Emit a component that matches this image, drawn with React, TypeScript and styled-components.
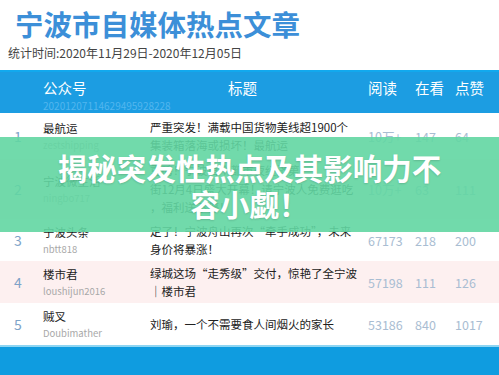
import React from "react"
import styled, { createGlobalStyle } from "styled-components"

interface Row {
  name: string
  handle: string
  title: string[]
  read: string
  watch: string
  like: string
  height: number
}

const rows: Row[] = [
  {
    name: "最航运",
    handle: "zestshipping",
    title: ["严重突发！满载中国货物美线超1900个", "集装箱落海或损坏！最航运"],
    read: "10万+",
    watch: "147",
    like: "64",
    height: 46,
  },
  {
    name: "宁波微生活",
    handle: "ningbo717",
    title: [
      "重磅！宁波首个都市夜经济第一",
      "街12月4日盛大开幕！请宁波人免费逛吃",
      "，福利送不停！",
    ],
    read: "10万+",
    watch: "63",
    like: "111",
    height: 60,
  },
  {
    name: "宁波头条",
    handle: "nbtt818",
    title: ["定了！宁波舟山再次“牵手成功”，未来", "身价将暴涨！"],
    read: "67173",
    watch: "218",
    like: "200",
    height: 42,
  },
  {
    name: "楼市君",
    handle: "loushijun2016",
    title: ["绿城这场“走秀级”交付，惊艳了全宁波", "｜楼市君"],
    read: "57198",
    watch: "111",
    like: "126",
    height: 42,
  },
  {
    name: "贼叉",
    handle: "Doubimather",
    title: ["刘瑜，一个不需要食人间烟火的家长"],
    read: "53186",
    watch: "840",
    like: "1017",
    height: 42,
  },
]

const App = () => {
  return (
    <Page>
      <GlobalStyle />
      <Head>
        <Title>宁波市自媒体热点文章</Title>
        <Period>统计时间:2020年11月29日-2020年12月05日</Period>
      </Head>
      <Table>
        <HeaderRow>
          <span />
          <NameHead>
            <HeadLabel>公众号</HeadLabel>
            <HeadCode>20201207114629495928228</HeadCode>
          </NameHead>
          <HeadLabel $indent={78}>标题</HeadLabel>
          <HeadLabel>阅读</HeadLabel>
          <HeadLabel>在看</HeadLabel>
          <HeadLabel>点赞</HeadLabel>
        </HeaderRow>
        {rows.map((row, i) => (
          <DataRow key={row.handle} $height={row.height} $alt={i % 2 === 1}>
            <Index>{i + 1}</Index>
            <NameCell>
              <Name>{row.name}</Name>
              <Handle>{row.handle}</Handle>
            </NameCell>
            <TitleCell>
              {row.title.map((line) => (
                <div key={line}>{line}</div>
              ))}
            </TitleCell>
            <Stat>{row.read}</Stat>
            <Stat>{row.watch}</Stat>
            <Stat>{row.like}</Stat>
          </DataRow>
        ))}
        <Banner>
          <BannerText>揭秘突发性热点及其影响力不容小觑！</BannerText>
        </Banner>
      </Table>
      <Footer />
    </Page>
  )
}

export default App

const GlobalStyle = createGlobalStyle`
  html, body {
    margin: 0;
    padding: 0;
    background: #ffffff;
  }
  body {
    width: 499px;
    height: 375px;
    overflow: hidden;
    font-family: "Noto Sans CJK SC", "Noto Sans", sans-serif;
  }
`

const Page = styled.div`
  width: 499px;
  height: 375px;
  display: flex;
  flex-direction: column;
  overflow: hidden;
`

const Head = styled.header`
  height: 70px;
  box-sizing: border-box;
  padding: 6px 0 0 15px;
`

const Title = styled.h1`
  margin: 0;
  font-size: 28.5px;
  line-height: 36px;
  font-weight: 700;
  color: #3c8fd8;
`

const Period = styled.div`
  margin-top: 2px;
  margin-left: -7px;
  font-size: 12px;
  line-height: 18px;
  color: #444444;
`

const Table = styled.div`
  position: relative;
  border-top: 2px solid #12a9ee;
`

const columns = "36px 114px 218px 47px 40px 1fr"

const HeaderRow = styled.div`
  display: grid;
  grid-template-columns: ${columns};
  height: 41px;
  background: #1c9de2;
  color: #ffffff;
  padding-top: 5px;
  box-sizing: border-box;
`

const NameHead = styled.div`
  display: flex;
  flex-direction: column;
  padding-left: 7px;
`

const HeadLabel = styled.div<{ $indent?: number }>`
  font-size: 14.5px;
  line-height: 22px;
  padding-left: ${(p) => p.$indent ?? 0}px;
`

const HeadCode = styled.div`
  font-size: 10px;
  line-height: 13px;
  color: #52b6ee;
  white-space: nowrap;
`

const DataRow = styled.div<{ $height: number; $alt: boolean }>`
  display: grid;
  grid-template-columns: ${columns};
  align-items: center;
  height: ${(p) => p.$height}px;
  background: ${(p) => (p.$alt ? "#fdf0f0" : "#ffffff")};
`

const Index = styled.div`
  text-align: center;
  font-size: 14px;
  color: #7ea3c8;
`

const NameCell = styled.div`
  padding-left: 7px;
  display: flex;
  flex-direction: column;
`

const Name = styled.div`
  font-size: 11.5px;
  line-height: 18px;
  color: #222222;
`

const Handle = styled.div`
  font-size: 9.5px;
  line-height: 16px;
  color: #a8a8a8;
`

const TitleCell = styled.div`
  font-size: 11.5px;
  line-height: 18.5px;
  color: #222222;
  white-space: nowrap;
`

const Stat = styled.div`
  font-size: 12.5px;
  color: #a9bdd2;
`

const Banner = styled.div`
  position: absolute;
  left: 0;
  right: 0;
  top: 65px;
  height: 95px;
  background: rgba(98, 214, 162, 0.9);
  display: flex;
  align-items: center;
  justify-content: center;
`

const BannerText = styled.div`
  width: 400px;
  text-align: center;
  font-size: 29.5px;
  line-height: 36px;
  font-weight: 700;
  color: #ffffff;
  text-shadow: 0 1px 2px rgba(0, 0, 0, 0.15);
`

const Footer = styled.footer`
  flex: 1;
  background: #0f9ce0;
  border-top: 2px solid #8ed5f2;
`
